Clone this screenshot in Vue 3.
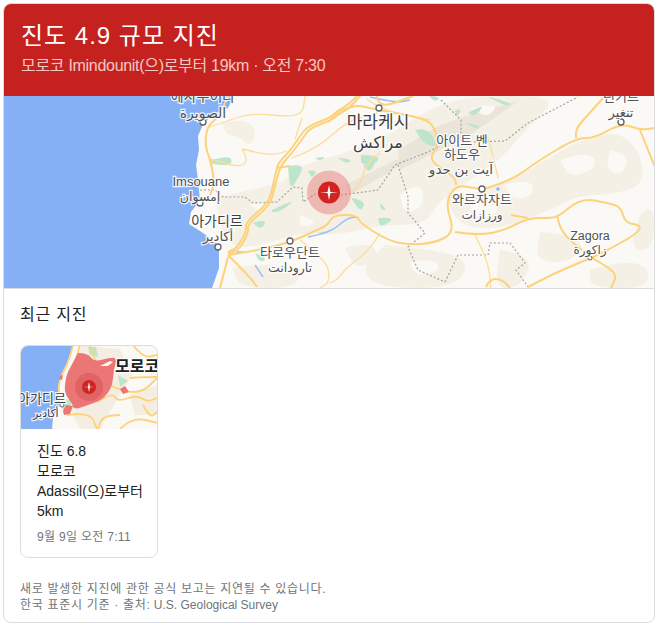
<template>
  <div class="card">
    <header class="head">
      <h1>진도 4.9 규모 지진</h1>
      <p>모로코 Imindounit(으)로부터 19km · 오전 7:30</p>
    </header>

    <svg class="map" viewBox="4 96 650 192" width="650" height="192">
      <rect x="4" y="96" width="650" height="192" fill="#fbf9f5" />
      <g class="soft">
        <path v-for="(d, i) in tanPaths" :key="'t' + i" :d="d" fill="#f5f0e6" />
        <path d="M398 150 L440 125 L470 115 L520 100 L470 135 L430 155 L400 170 Z M345 185 L395 160 L420 150 L390 172 L350 195 Z" fill="#ebe5d9" />
        <path v-for="(d, i) in gapPaths" :key="'c' + i" :d="d" fill="#fbf9f5" />
        <path v-for="(d, i) in greenPaths" :key="'g' + i" :d="d" fill="#bce5cb" />
      </g>
      <path d="M234 96 L228 108 L217 113 L204 122 L198 136 L199 150 L196 165 L198 180 L200 200 L191 212 L189 224 L203 233 L215 242 L219 250 L219 268 L212 288 L4 288 L4 96 Z" fill="#86b0f6" />
      <g class="faint">
        <path v-for="(d, i) in riverPaths" :key="'w' + i" :d="d" fill="none" stroke="#9dbff8" stroke-width="1.500" />
        <path v-for="(d, i) in borderPaths" :key="'b' + i" :d="d" fill="none" stroke="#a3a3a0" stroke-width="1.200" stroke-dasharray="2 2" />
        <path v-for="(d, i) in thinPaths" :key="'n' + i" :d="d" fill="none" stroke="#fddc9a" stroke-width="1.300" />
        <path v-for="(d, i) in roadPaths" :key="'r' + i" :d="d" fill="none" stroke="#fdd27c" stroke-width="2" stroke-linejoin="round" />
      </g>

      <circle cx="329" cy="192.500" r="22" fill="#e57373" fill-opacity="0.45" />
      <circle cx="329" cy="192.500" r="11" fill="#d32320" />
      <path d="M320 192.500 L327.500 192 L329 185 L330.500 192 L338 192.500 L330.500 193 L329 200 L327.500 193 Z" fill="#fff" />

      <circle v-for="c in cities" :key="c.x + '-' + c.y" :cx="c.x" :cy="c.y" r="3" fill="#fff" stroke="#5f6368" stroke-width="1.300" />
      <circle cx="498" cy="189" r="1.800" fill="#8ab4f8" />
      <circle cx="590" cy="258" r="2" fill="#fff" stroke="#5f6368" />
      <text
        v-for="l in labels"
        :key="l.text"
        :x="l.x"
        :y="l.y"
        :font-size="l.size"
        :fill="l.fill || '#4d5156'"
        class="label"
        text-anchor="middle"
      >{{ l.text }}</text>
    </svg>

    <section class="recent">
      <h2>최근 지진</h2>
      <article class="quake">
        <svg class="thumb" viewBox="0 0 138 84" width="138" height="84">
          <rect width="138" height="84" fill="#fbf9f5" />
          <path d="M60 0 L100 4 L112 30 L100 50 L80 84 L60 84 L48 60 Z M110 50 L138 40 L138 70 L115 70 Z" fill="#f4eee2" />
          <path d="M53 0 L47 18 L40 33 L38 48 L40 60 L33 73 L32 84 L0 84 L0 0 Z" fill="#86b0f6" />
          <path d="M42 55 L52 54 L50 66 L42 64 Z M68 2 L76 2 L78 12 L70 10 Z M98 30 L108 36 L100 42 Z" fill="#bce5cb" />
          <path v-for="(d, i) in thumbPaths" :key="i" :d="d" fill="none" stroke="#fdd27c" stroke-width="1.800" />
          <path :d="quakeArea" fill="#ec7575" />
          <path d="M40 31 L43 30 L42 35 L39 34 Z M100 44 L105 41 L109 47 L103 49 Z M46 60 L53 61 L50 69 L44 70 L43 66 Z" fill="#ec7575" />
          <path d="M80 21 L90 16 L93 17 L88 21 Z" fill="#fbf9f5" />
          <circle cx="69" cy="42" r="14" fill="#df6564" />
          <circle cx="69" cy="42" r="7" fill="#d32320" />
          <path d="M63 42 L68 41.700 L69 37 L70 41.700 L75 42 L70 42.300 L69 47 L68 42.300 Z" fill="#fff" />
          <circle cx="42" cy="60" r="2" fill="#fff" stroke="#5f6368" />
          <text x="-2" y="58" font-size="13" fill="#3c4043" class="label">아가디르</text>
          <text x="13" y="72" font-size="11" fill="#3c4043" class="label">أكادير</text>
          <text x="95" y="27" font-size="16" font-weight="700" fill="#202124" class="label">모로코</text>
        </svg>
        <div class="quake-body">
          <div>진도 6.8</div>
          <div>모로코</div>
          <div>Adassil(으)로부터</div>
          <div>5km</div>
          <div class="quake-time">9월 9일 오전 7:11</div>
        </div>
      </article>
      <footer class="note">
        <div class="note-first">새로 발생한 지진에 관한 공식 보고는 지연될 수 있습니다.</div>
        <div><span class="note-first">한국 표준시 기준 · 출처:</span> U.S. Geological Survey</div>
      </footer>
    </section>
  </div>
</template>

<script setup>
// rounds a list of x,y points into a path, so the roads don't look like polylines
const smooth = (pts) => {
  let d = `M${pts[0]} ${pts[1]}`
  for (let i = 2; i < pts.length - 2; i += 2) {
    const mx = (pts[i] + pts[i + 2]) / 2
    const my = (pts[i + 1] + pts[i + 3]) / 2
    d += ` Q${pts[i]} ${pts[i + 1]} ${mx} ${my}`
  }
  return d + ` L${pts[pts.length - 2]} ${pts[pts.length - 1]}`
}

const blob = (pts) => smooth([...pts, pts[0], pts[1]]) + ' Z'

const roadPaths = [
  [357, 96, 347, 106, 337, 111, 330, 118, 308, 126, 300, 136, 290, 151, 278, 163, 275, 176, 272, 190, 268, 203, 245, 223, 247, 230, 237, 248, 228, 252],
  [360, 96, 350, 108, 340, 113, 332, 120, 310, 128, 303, 138, 292, 153, 281, 165, 277, 178, 274, 190, 270, 205, 247, 225, 249, 231, 240, 249, 228, 254],
  [228, 96, 220, 116, 207, 126, 205, 146, 210, 159, 215, 183, 210, 195],
  [228, 255, 260, 250, 290, 242, 313, 232, 328, 225, 333, 215, 357, 215, 360, 223, 387, 240, 408, 245, 435, 243, 455, 232, 445, 203, 456, 185, 475, 188, 483, 190, 515, 178, 535, 163, 576, 138, 595, 138, 621, 123, 640, 130, 655, 128],
  [455, 232, 475, 235, 501, 232, 528, 218, 548, 218, 558, 217, 581, 198, 608, 203, 621, 207, 625, 223, 641, 225, 638, 233, 608, 250, 591, 258],
  [558, 217, 558, 230, 591, 258, 618, 273, 611, 288],
  [591, 258, 561, 270, 528, 287],
  [511, 215, 528, 218],
  [328, 122, 348, 103, 378, 110, 423, 118, 435, 127, 438, 147, 428, 160, 455, 177, 456, 185],
  [576, 138, 575, 130, 585, 118, 605, 96],
  [640, 130, 648, 150, 655, 167],
  [486, 287, 490, 278, 503, 280, 510, 288],
  [277, 168, 290, 166],
  [228, 255, 250, 277, 257, 287],
  [228, 257, 220, 288],
  [377, 96, 378, 109, 413, 96]
].map(smooth)

const thinPaths = [
  [207, 128, 233, 119, 253, 113, 302, 118, 305, 96],
  [302, 118, 295, 139],
  [242, 149, 270, 156, 287, 151],
  [242, 149, 248, 158, 242, 168, 210, 159],
  [292, 158, 317, 149, 347, 121, 377, 113],
  [380, 153, 367, 161, 360, 186, 350, 193],
  [300, 240, 327, 260, 330, 282, 320, 288],
  [380, 233, 370, 250, 347, 267, 337, 280, 330, 283],
  [475, 235, 488, 260, 491, 288],
  [498, 178, 491, 147, 486, 133],
  [367, 99, 378, 109, 430, 120]
].map(smooth)

const riverPaths = [
  [308, 237, 330, 233, 347, 218, 357, 217],
  [255, 265, 263, 277],
  [236, 252, 244, 252],
  [370, 97, 395, 103, 410, 100]
].map(smooth)

const borderPaths = [
  [200, 190, 215, 190, 223, 197, 245, 197, 253, 203, 277, 202, 293, 187, 302, 188, 303, 202, 317, 193],
  [341, 195, 378, 190, 395, 165, 428, 152, 438, 147],
  [470, 142, 505, 141, 528, 123, 578, 97],
  [441, 100, 461, 120, 461, 133],
  [398, 165, 408, 197, 408, 213, 425, 233, 408, 247, 418, 270, 445, 282],
  [445, 282, 458, 255, 488, 255, 490, 243, 510, 243, 525, 263, 516, 270, 528, 287]
].map((pts) => {
  // dotted lines keep their corners
  let d = `M${pts[0]} ${pts[1]}`
  for (let i = 2; i < pts.length; i += 2) d += ` L${pts[i]} ${pts[i + 1]}`
  return d
})

const tanPaths = [
  [223, 123, 245, 118, 257, 132, 250, 147, 238, 136, 226, 135],
  [215, 198, 250, 190, 285, 182, 300, 165, 340, 155, 390, 135, 430, 108, 470, 96, 560, 96, 530, 125, 500, 160, 470, 180, 440, 200, 425, 225, 380, 225, 340, 235, 300, 232, 255, 248, 225, 245],
  [445, 195, 480, 195, 530, 170, 575, 142, 615, 130, 640, 150, 645, 185, 610, 195, 580, 195, 550, 210, 505, 228, 460, 228],
  [640, 215, 654, 200, 654, 250, 630, 250],
  [540, 232, 585, 235, 575, 262, 535, 262],
  [385, 245, 440, 250, 470, 262, 455, 288, 380, 288, 360, 270],
  [232, 268, 268, 262, 300, 272, 295, 288, 240, 288],
  [500, 250, 535, 255, 520, 288, 495, 288],
  [590, 270, 640, 255, 654, 288, 590, 288],
  [345, 248, 372, 240, 380, 262, 355, 268]
].map(blob)

// light holes so the tan areas break up like the terrain does
const gapPaths = [
  [505, 185, 530, 178, 535, 195, 512, 200],
  [560, 160, 590, 150, 598, 168, 570, 178],
  [610, 150, 630, 155, 622, 175, 606, 170],
  [470, 205, 495, 200, 498, 215, 475, 218],
  [395, 235, 420, 232, 416, 242, 398, 244],
  [410, 262, 435, 258, 440, 272, 415, 276],
  [250, 205, 268, 198, 262, 212],
  [300, 215, 320, 222, 300, 228],
  [470, 108, 500, 102, 488, 118],
  [400, 195, 420, 180, 425, 205, 405, 215]
].map(blob)

const greenPaths = [
  [210, 161, 230, 154, 233, 166, 210, 164],
  [288, 166, 305, 163, 298, 179, 290, 190],
  [315, 158, 327, 156, 320, 161],
  [338, 158, 353, 159, 347, 164],
  [363, 166, 377, 159, 370, 173],
  [308, 171, 318, 169, 312, 179],
  [415, 130, 428, 127, 438, 147, 425, 145],
  [455, 110, 463, 108, 456, 118],
  [466, 123, 480, 125, 478, 130],
  [428, 95, 441, 97, 435, 102],
  [468, 113, 486, 103, 475, 117],
  [488, 97, 511, 102, 508, 107],
  [351, 198, 366, 200, 361, 213],
  [380, 203, 388, 210, 381, 210],
  [378, 218, 397, 217, 380, 228],
  [361, 155, 381, 155, 375, 165, 361, 165],
  [272, 210, 297, 198, 283, 210, 272, 213],
  [253, 223, 267, 218, 262, 230],
  [317, 233, 332, 230, 325, 235],
  [255, 253, 268, 258, 260, 263]
].map(blob)

const quakeArea = blob([58, 8, 68, 8, 74, 17, 92, 12, 97, 14, 94, 24, 93, 34, 91, 44, 82, 55, 68, 60, 54, 65, 52, 58, 44, 48, 46, 31, 51, 21])

const thumbPaths = [
  [53, 0, 50, 14, 40, 33, 38, 48, 45, 67],
  [60, 0, 56, 14, 52, 24],
  [90, 40, 103, 47, 123, 47, 137, 33],
  [77, 57, 93, 47, 97, 57, 117, 50, 127, 57, 137, 53],
  [123, 60, 130, 73, 137, 67],
  [47, 70, 70, 67, 77, 84],
  [100, 70, 83, 70, 78, 84],
  [137, 32, 123, 32, 110, 33],
  [113, 0, 123, 13, 137, 10],
  [70, 0, 76, 18],
  [100, 84, 112, 72, 138, 78]
].map(smooth)

const cities = [
  { x: 203, y: 122 },
  { x: 379, y: 108 },
  { x: 621, y: 122 },
  { x: 482, y: 189 },
  { x: 290, y: 241 },
  { x: 218, y: 247 },
  { x: 200, y: 203 }
]

const labels = [
  { text: '에사우이라', x: 203, y: 101, size: 14 },
  { text: 'الصويرة', x: 203, y: 118, size: 14 },
  { text: '틴기르', x: 621, y: 101, size: 13 },
  { text: 'تنغير', x: 621, y: 117, size: 13 },
  { text: '마라케시', x: 378, y: 128, size: 17, fill: '#3c4043' },
  { text: 'مراكش', x: 378, y: 148, size: 16, fill: '#3c4043' },
  { text: '아이트 벤', x: 462, y: 145, size: 13 },
  { text: '하도우', x: 462, y: 159, size: 13 },
  { text: 'آيت بن حدو', x: 461, y: 174, size: 13.500 },
  { text: 'Imsouane', x: 201, y: 186, size: 13 },
  { text: 'إمسوان', x: 200, y: 201, size: 12.500 },
  { text: '아가디르', x: 217, y: 226, size: 14, fill: '#3c4043' },
  { text: 'أكادير', x: 218, y: 241, size: 13 },
  { text: '타로우단트', x: 290, y: 257, size: 13 },
  { text: 'تارودانت', x: 290, y: 272, size: 12.500 },
  { text: '와르자자트', x: 482, y: 204, size: 13 },
  { text: 'ورزازات', x: 482, y: 219, size: 12 },
  { text: 'Zagora', x: 590, y: 240, size: 12.500 },
  { text: 'زاكورة', x: 590, y: 254, size: 12 }
]
</script>

<style scoped>
.card {
  box-sizing: border-box;
  width: 652px;
  height: 620px;
  margin: 3px 0 0 3px;
  border: 1px solid #dadce0;
  border-radius: 8px;
  overflow: hidden;
  background: #fff;
  font-family: "Liberation Sans", "Noto Sans CJK KR", sans-serif;
  color: #202124;
}

.head {
  box-sizing: border-box;
  height: 92px;
  padding: 16px 16px 0 17px;
  background: #c5221f;
  color: #fff;
}

.head h1 {
  margin: 0;
  font-size: 24px;
  font-weight: 400;
  line-height: 32px;
  letter-spacing: 1px;
}

.head p {
  margin: 4px 0 0;
  font-size: 16px;
  line-height: 20px;
  letter-spacing: -0.3px;
  color: #f4c7c3;
}

.map {
  display: block;
}

.soft {
  filter: blur(0.6px);
}

.faint {
  filter: blur(0.3px);
}

.label {
  font-family: "Liberation Sans", "Noto Sans CJK KR", "DejaVu Sans", sans-serif;
  stroke: #fff;
  stroke-width: 2.5px;
  stroke-opacity: 0.85;
  paint-order: stroke;
}

.recent {
  border-top: 1px solid #dadce0;
  padding: 16px 16px 0;
}

.recent h2 {
  margin: 0 0 20px;
  font-size: 16px;
  font-weight: 400;
  line-height: 20px;
  letter-spacing: 0.8px;
}

.quake {
  box-sizing: border-box;
  width: 138px;
  height: 213px;
  border: 1px solid #dadce0;
  border-radius: 8px;
  overflow: hidden;
}

.thumb {
  display: block;
  margin: -1px 0 0 -1px;
}

.quake-body {
  padding: 12px 16px 0;
  font-size: 14px;
  line-height: 20px;
  white-space: nowrap;
}

.quake-time {
  margin-top: 6px;
  font-size: 12px;
  letter-spacing: 0.3px;
  color: #70757a;
}

.note {
  margin-top: 23px;
  font-size: 12px;
  line-height: 16px;
  color: #70757a;
}

.note-first {
  letter-spacing: 0.7px;
}
</style>
